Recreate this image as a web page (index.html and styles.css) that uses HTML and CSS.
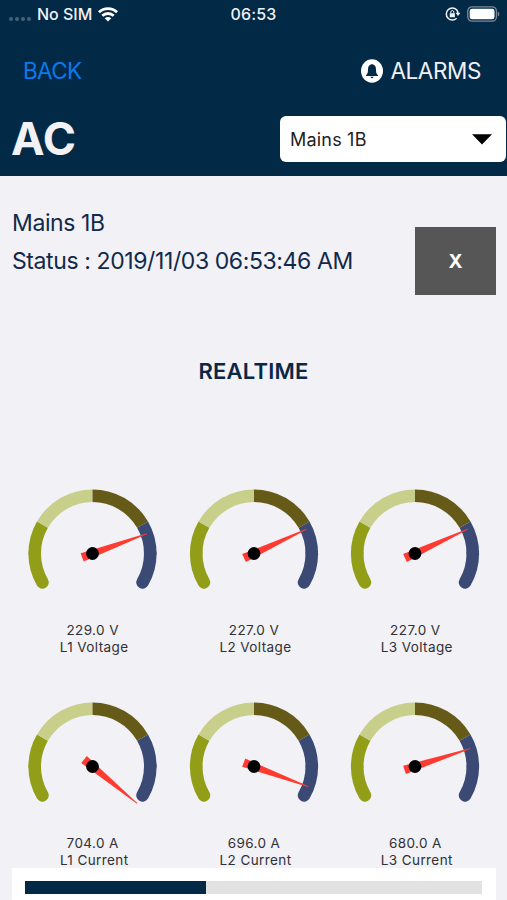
FILE: index.html
```html
<!DOCTYPE html>
<html lang="en">
<head>
    <meta charset="UTF-8">
    <meta name="viewport" content="width=device-width, initial-scale=1.0">
    <title>AC</title>
    <link rel="stylesheet" href="styles.css">
</head>
<body>
    <!-- Shared gauge shapes -->
    <svg class="defs" width="0" height="0">
        <defs>
            <g id="dial" fill="none" stroke-width="12.6">
                <path d="M-57.8 0A57.8 57.8 0 0 0 -50.06 28.9" stroke="#929d18" stroke-linecap="round"/>
                <path d="M57.8 0A57.8 57.8 0 0 1 50.06 28.9" stroke="#3b4a74" stroke-linecap="round"/>
                <path d="M-50.06 -28.9A57.8 57.8 0 0 0 -57.8 1" stroke="#929d18"/>
                <path d="M50.06 -28.9A57.8 57.8 0 0 1 57.8 1" stroke="#3b4a74"/>
                <path d="M-50.06 -28.9A57.8 57.8 0 0 1 0 -57.8" stroke="#c7cf8a"/>
                <path d="M0 -57.8A57.8 57.8 0 0 1 50.06 -28.9" stroke="#655a18"/>
            </g>
            <path id="needle" d="M-11 -4.4L58 -0.4V0.4L-11 4.4Z" fill="#ff3a30"/>
        </defs>
    </svg>

    <div class="screen">
        <header class="header">
            <div class="status-bar">
                <div class="carrier">
                    <span class="dots"><i></i><i></i><i></i><i></i></span>
                    <span class="sim">No SIM</span>
                    <svg class="wifi" width="20" height="15" viewBox="0 0 20 15">
                        <g fill="none" stroke="#fff" stroke-width="2.8">
                            <path d="M1 5.3C6 .5 14 .5 19 5.3"/>
                            <path d="M4.3 8.8C7.6 5.7 12.4 5.7 15.7 8.8"/>
                        </g>
                        <path d="M10 14.6L6.7 11.3C8.6 9.6 11.4 9.6 13.3 11.3Z" fill="#fff"/>
                    </svg>
                </div>
                <span class="clock">06:53</span>
                <div class="indicators">
                    <svg width="16" height="14" viewBox="0 0 16 14">
                        <path d="M11.6 2.8A6 6 0 1 0 11.6 11.2M11.6 2.8A6 6 0 0 1 13 6.2" fill="none" stroke="#f1f2f6" stroke-width="1.5"/>
                        <path d="M10.6 5.8H15.4L13 9Z" fill="#f1f2f6"/>
                        <rect x="4.7" y="6.2" width="5.2" height="4" rx=".5" fill="#f1f2f6"/>
                        <path d="M5.8 6.5V5.1A1.5 1.5 0 0 1 8.8 5.1V6.5" fill="none" stroke="#f1f2f6"/>
                    </svg>
                    <svg width="33" height="16" viewBox="0 0 33 16">
                        <rect x=".8" y=".8" width="28.6" height="14.4" rx="4.2" fill="none" stroke="#7c8c9b" stroke-width="1.3"/>
                        <rect x="2.7" y="2.7" width="24.8" height="10.6" rx="2.4" fill="#fff"/>
                        <path d="M30.8 5.5C32.8 6.4 32.8 9.6 30.8 10.5Z" fill="#7c8c9b"/>
                    </svg>
                </div>
            </div>

            <div class="nav">
                <a class="back">BACK</a>
                <a class="alarms">
                    <svg width="22" height="24" viewBox="0 0 22 24">
                        <ellipse cx="11" cy="12" rx="11" ry="11.7" fill="#fff"/>
                        <path d="M10 5.6Q11 4.4 12 5.6C14.5 6.3 15 8.5 15 10.5C15 13.5 15.4 14.7 17 16.3V17H5V16.3C6.6 14.7 7 13.5 7 10.5C7 8.5 7.5 6.3 10 5.6ZM9.4 17.8H12.6Q12.3 19.2 11 19.2Q9.7 19.2 9.4 17.8Z" fill="#022945"/>
                    </svg>
                    <span>ALARMS</span>
                </a>
            </div>

            <div class="title-row">
                <h1>AC</h1>
                <div class="select">
                    <span>Mains 1B</span>
                    <svg width="20" height="11" viewBox="0 0 20 11"><path d="M0 .3H20L10 10.5Z" fill="#000"/></svg>
                </div>
            </div>
        </header>

        <section class="info">
            <div>
                <p class="name">Mains 1B</p>
                <p class="status">Status : 2019/11/03 06:53:46 AM</p>
            </div>
            <button class="close-btn">X</button>
        </section>

        <h2>REALTIME</h2>

        <div class="gauges">
            <div class="gauge">
                <svg width="130" height="105" viewBox="-64.5 -64.5 130 105"><use href="#dial"/><use href="#needle" transform="rotate(-20)"/><circle r="6.4"/></svg>
                <p class="value">229.0 V</p>
                <p class="label">L1 Voltage</p>
            </div>
            <div class="gauge">
                <svg width="130" height="105" viewBox="-65 -64.5 130 105"><use href="#dial"/><use href="#needle" transform="rotate(-24.8)"/><circle r="6.4"/></svg>
                <p class="value">227.0 V</p>
                <p class="label">L2 Voltage</p>
            </div>
            <div class="gauge">
                <svg width="130" height="105" viewBox="-65 -64.5 130 105"><use href="#dial"/><use href="#needle" transform="rotate(-24.8)"/><circle r="6.4"/></svg>
                <p class="value">227.0 V</p>
                <p class="label">L3 Voltage</p>
            </div>
            <div class="gauge">
                <svg width="130" height="105" viewBox="-64.5 -64.5 130 105"><use href="#dial"/><use href="#needle" transform="rotate(39.6)"/><circle r="6.4"/></svg>
                <p class="value">704.0 A</p>
                <p class="label">L1 Current</p>
            </div>
            <div class="gauge">
                <svg width="130" height="105" viewBox="-65 -64.5 130 105"><use href="#dial"/><use href="#needle" transform="rotate(20.4)"/><circle r="6.4"/></svg>
                <p class="value">696.0 A</p>
                <p class="label">L2 Current</p>
            </div>
            <div class="gauge">
                <svg width="130" height="105" viewBox="-65 -64.5 130 105"><use href="#dial"/><use href="#needle" transform="rotate(-18)"/><circle r="6.4"/></svg>
                <p class="value">680.0 A</p>
                <p class="label">L3 Current</p>
            </div>
        </div>

        <!-- Load bar, stays above the gauges -->
        <div class="progress">
            <div class="track"><div class="fill" style="width: 39.6%"></div></div>
        </div>
    </div>
</body>
</html>
```
FILE: styles.css
```css
* {
    box-sizing: border-box;
}

body {
    margin: 0;
    font-family: Inter, "Liberation Sans", sans-serif;
    background-color: #f1f1f6;
    color: #12294a;
}

h1, h2, p {
    margin: 0;
    font-weight: 400;
}

svg {
    display: block;
    flex: none;
}

.defs {
    position: absolute;
}

.screen {
    position: relative;
    height: 900px;
    overflow: hidden;
}

.header {
    height: 176px;
    background-color: #022945;
    color: #f1f1f6;
}

.status-bar {
    display: grid;
    grid-template-columns: 1fr auto 1fr;
    align-items: center;
    height: 28px;
    padding: 0 7px 0 9px;
    font-size: 16px;
    font-weight: 500;
}

.carrier {
    display: flex;
    align-items: center;
}

.dots {
    display: flex;
    gap: 2px;
    margin: 10px 6px 0 0;
}

.dots i {
    width: 4px;
    height: 4px;
    border-radius: 50%;
    background-color: #45617a;
}

.sim {
    margin-right: 6px;
}

.clock {
    margin-right: 2px;
    letter-spacing: 0.2px;
}

.indicators {
    display: flex;
    justify-content: flex-end;
    align-items: center;
    gap: 6px;
}

.nav {
    display: flex;
    justify-content: space-between;
    align-items: center;
    height: 86px;
    margin-bottom: 1px;
    padding: 0 26px 0 23px;
    font-size: 22.5px;
    line-height: 28px;
}

.back {
    color: #0a7aea;
    letter-spacing: -0.6px;
}

.alarms {
    display: flex;
    align-items: center;
    gap: 7px;
    letter-spacing: -0.4px;
}

.title-row {
    display: flex;
    justify-content: space-between;
    align-items: center;
    padding: 0 1px 0 11px;
}

h1 {
    font-size: 45px;
    font-weight: 700;
    line-height: 48px;
}

.select {
    display: flex;
    justify-content: space-between;
    align-items: center;
    width: 226px;
    height: 46px;
    padding: 0 14px 0 10px;
    border-radius: 6px;
    background-color: #fff;
    color: #222;
    font-size: 18px;
    letter-spacing: 0.2px;
}

.info {
    display: flex;
    justify-content: space-between;
    padding: 28px 11px 0 12px;
    font-size: 23px;
    line-height: 38px;
    letter-spacing: -0.4px;
}

.close-btn {
    width: 81px;
    height: 68px;
    margin-top: 23px;
    padding: 0;
    border: none;
    background-color: #565656;
    color: #fff;
    font-family: inherit;
    font-size: 19px;
    font-weight: 700;
}

h2 {
    margin-top: 61px;
    color: #0b2744;
    font-size: 22px;
    font-weight: 600;
    line-height: 30px;
    letter-spacing: 0.2px;
    text-align: center;
}

.gauges {
    display: grid;
    grid-template-columns: repeat(3, 1fr);
    row-gap: 34px;
    padding: 102px 11px 0 12px;
}

.gauge {
    display: flex;
    flex-direction: column;
    align-items: center;
    height: 179px;
}

.gauge svg {
    margin-top: 1px;
    margin-bottom: 28px;
    overflow: visible;
}

.gauge p {
    color: #303034;
    font-size: 13.5px;
    line-height: 17px;
    letter-spacing: 0.4px;
}

.gauge .label {
    padding-left: 3px;
}

.progress {
    position: absolute;
    left: 12px;
    right: 11px;
    bottom: 0;
    height: 32px;
    padding: 13px 14px 6px 13px;
    background-color: #fff;
}

.track {
    height: 13px;
    background-color: #e2e2e2;
}

.fill {
    height: 100%;
    background-color: #022945;
}
```
